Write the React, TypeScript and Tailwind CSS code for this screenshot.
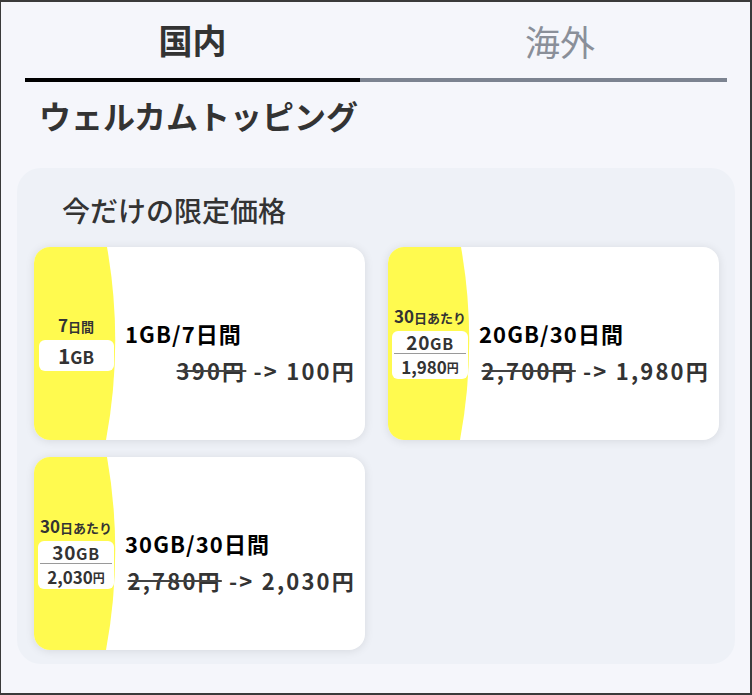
import React from 'react';

type Plan = {
    id: string;
    title: string;
    before: string;
    after: string;
    badge:
        | { kind: 'simple'; days: string; unit: string; gb: string }
        | { kind: 'per'; days: string; unit: string; gb: string; price: string };
};

const plans: Plan[] = [
    { id: 'p1', title: '1GB/7日間', before: '390円', after: '100円', badge: { kind: 'simple', days: '7', unit: '日間', gb: '1' } },
    { id: 'p2', title: '20GB/30日間', before: '2,700円', after: '1,980円', badge: { kind: 'per', days: '30', unit: '日あたり', gb: '20', price: '1,980' } },
    { id: 'p3', title: '30GB/30日間', before: '2,780円', after: '2,030円', badge: { kind: 'per', days: '30', unit: '日あたり', gb: '30', price: '2,030' } },
];

const font = { fontFamily: '"Noto Sans CJK JP", "Noto Sans", sans-serif' };

function Badge({ badge }: { badge: Plan['badge'] }) {
    return (
        <div className="flex flex-col items-center text-[#333]">
            <div className="flex items-baseline leading-[18px] font-bold">
                <span className="text-[17px]">{badge.days}</span>
                <span className="text-[13px]">{badge.unit}</span>
            </div>
            {badge.kind === 'simple' ? (
                <div className="mt-[4px] w-[75px] h-[31px] bg-white rounded-[6px] flex items-center justify-center font-bold leading-none">
                    <span className="text-[21px]">{badge.gb}</span>
                    <span className="text-[17px] mt-[2px]">GB</span>
                </div>
            ) : (
                <div className="mt-[4px] w-[76px] h-[48px] bg-white rounded-[6px] flex flex-col items-center px-[2px] leading-none">
                    <div className="h-[23px] w-full flex items-end justify-center pb-[2px] border-b border-[#9a9a9a] font-semibold tracking-[0.04em]">
                        <span className="text-[19px]">{badge.gb}</span>
                        <span className="text-[16px]">GB</span>
                    </div>
                    <div className="flex-1 flex items-center justify-center font-semibold">
                        <span className="text-[17px]">{badge.price}</span>
                        <span className="text-[12px] mt-[3px]">円</span>
                    </div>
                </div>
            )}
        </div>
    );
}

function PlanCard({ plan }: { plan: Plan }) {
    return (
        <div className="relative h-[193px] bg-white rounded-[16px] overflow-hidden shadow-[0_1px_10px_rgba(0,0,0,0.10)] flex">
            <svg className="absolute left-0 top-0" width="90" height="193" viewBox="0 0 90 193">
                <path d="M0 0 H73 Q90 96 72 193 H0 Z" fill="#fffa4f" />
            </svg>
            <div className="relative w-[81px] pl-[3px] flex items-center justify-center">
                <Badge badge={plan.badge} />
            </div>
            <div className="relative flex-1 flex flex-col justify-center pl-[10px] pr-[9px] pt-[16px]">
                <div className="text-[22px] font-bold text-black leading-[1.2] tracking-[0.05em]">{plan.title}</div>
                <div className="mt-[11px] text-right text-[22px] font-semibold text-[#333] leading-[1.2] whitespace-nowrap tracking-[0.1em]">
                    <span className="line-through decoration-2 decoration-[#444]">{plan.before}</span>
                    <span> -&gt; {plan.after}</span>
                </div>
            </div>
        </div>
    );
}

export default function App() {
    return (
        <div
            className="w-[752px] h-[695px] box-border overflow-hidden bg-[#f5f6fb] border-l border-t-2 border-r-2 border-b-2 border-[#3a3a3a]"
            style={font}
        >
            {/* Tabs */}
            <div className="flex ml-[24px] mr-[23px]">
                <div className="w-[335px] h-[80px] flex items-center justify-center border-b-4 border-black">
                    <span className="text-[34px] font-bold text-[#333] leading-none">国内</span>
                </div>
                <div className="flex-1 h-[80px] flex items-center justify-center pl-[33px] border-b-4 border-[#7c8390]">
                    <span className="text-[35px] font-normal text-[#8a8f99] leading-none">海外</span>
                </div>
            </div>

            <h1 className="mt-[14px] ml-[38px] text-[32px] font-bold text-[#333] leading-[1.2]">ウェルカムトッピング</h1>

            {/* Limited panel */}
            <div className="mt-[34px] ml-[16px] w-[718px] rounded-[24px] bg-[#eef1f7] pt-[26px] pb-[14px] pl-[17px] pr-[16px]">
                <div className="ml-[28px] text-[28px] font-medium text-[#333] leading-[1.2]">今だけの限定価格</div>
                <div className="mt-[19px] grid grid-cols-2 gap-x-[23px] gap-y-[17px]">
                    {plans.map((p) => (
                        <PlanCard key={p.id} plan={p} />
                    ))}
                </div>
            </div>
        </div>
    );
}
